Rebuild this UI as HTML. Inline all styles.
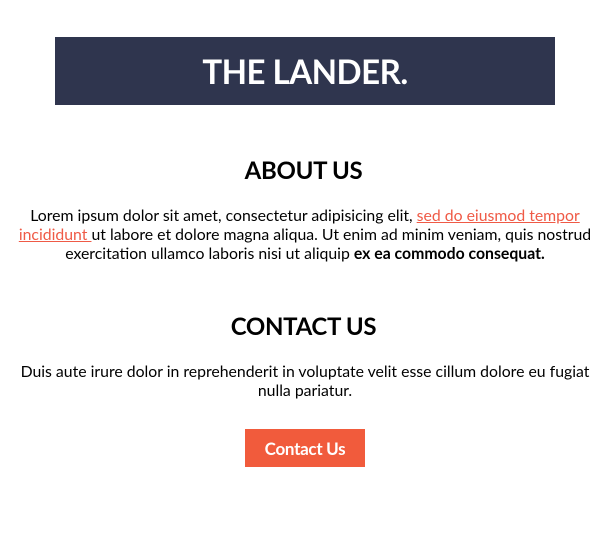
<!DOCTYPE html>
<html><head><style>
body{margin:0;background:#fff;font-family:Lato,"Liberation Sans",sans-serif;color:#000;width:607px;height:550px;overflow:hidden;position:relative}
.hdr{position:absolute;left:55px;top:37px;width:500px;height:68px;background:#2f354e;color:#fff;font-weight:bold;font-size:33px;text-align:center;line-height:70px;letter-spacing:-0.5px}
h2{position:absolute;left:0;width:607px;margin:0;text-align:center;font-size:24px;font-weight:bold;letter-spacing:-0.3px}
p{position:absolute;left:0;width:610px;margin:0;text-align:center;font-size:15.8px;line-height:19px;white-space:nowrap}
a{color:#ef5a46;text-decoration:underline}
.btn{position:absolute;left:245px;top:429px;width:120px;height:38px;background:#f15b3c;color:#fff;font-weight:bold;font-size:17px;line-height:39px;text-align:center;letter-spacing:-0.3px}
</style></head><body>
<div class="hdr">THE LANDER.</div>
<h2 style="top:156px">ABOUT US</h2>
<p style="top:206px">Lorem ipsum dolor sit amet, consectetur adipisicing elit, <a>sed do eiusmod tempor</a><br><a>incididunt </a> ut labore et dolore magna aliqua. Ut enim ad minim veniam, quis nostrud<br>exercitation ullamco laboris nisi ut aliquip <b>ex ea commodo consequat.</b></p>
<h2 style="top:312px">CONTACT US</h2>
<p style="top:362px">Duis aute irure dolor in reprehenderit in voluptate velit esse cillum dolore eu fugiat<br>nulla pariatur.</p>
<div class="btn">Contact Us</div>
</body></html>
